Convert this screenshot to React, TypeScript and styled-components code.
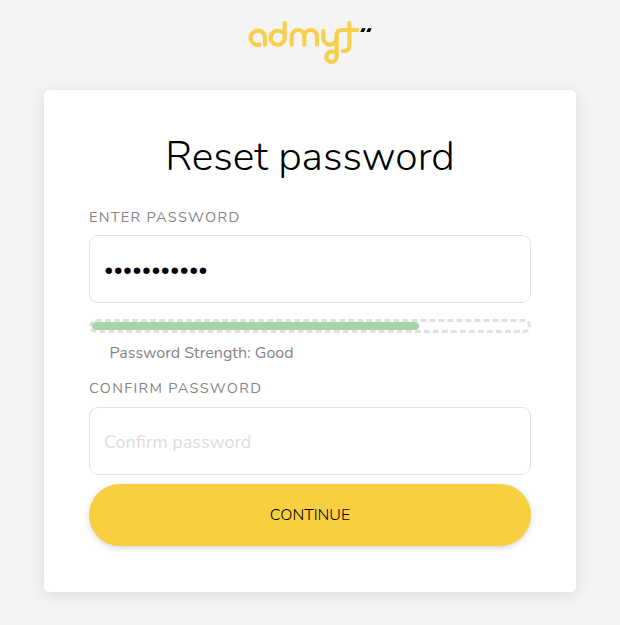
import React, { useState } from "react";
import styled, { createGlobalStyle } from "styled-components";

const GlobalStyle = createGlobalStyle`
  *, *::before, *::after { box-sizing: border-box; }
  body {
    margin: 0;
    background: #f4f4f4;
    font-family: Nunito, Lato, sans-serif;
    color: #000;
  }
`;

const Page = styled.main`
  display: flex;
  flex-direction: column;
  align-items: center;
  min-height: 625px;
  padding-top: 20px;
`;

const Logo = styled.svg`
  display: block;
  width: 124px;
  height: 46px;
  margin-bottom: 24px;
`;

const Card = styled.form`
  display: flex;
  flex-direction: column;
  width: 532px;
  height: 502px;
  padding: 39px 45px 0;
  background: #fff;
  border-radius: 5px;
  box-shadow: 0 3px 15px rgba(0, 0, 0, 0.1);
`;

const Title = styled.h1`
  margin: 0 0 19px;
  font-size: 40.8px;
  line-height: 56px;
  font-weight: 300;
  text-align: center;
  white-space: nowrap;
`;

const Label = styled.label<{ $gap: number }>`
  height: 20px;
  margin-bottom: ${({ $gap }) => $gap}px;
  font-size: 14.5px;
  font-weight: 370;
  line-height: 26px;
  letter-spacing: 1.3px;
  text-transform: uppercase;
  color: #858585;
`;

const Field = styled.input`
  width: 100%;
  height: 68px;
  padding: 2px 14px 0;
  border: 1px solid #e3e3e3;
  border-radius: 9px;
  outline: none;
  background: #fff;
  font: 400 18px Nunito, Lato, sans-serif;
  color: #000;
  &::placeholder { color: #dcdcdc; opacity: 1; }
`;

const Meter = styled.div`
  height: 14px;
  margin-top: 16px;
  border: 3px dashed #e0e0e0;
  border-radius: 7px;
`;

const MeterFill = styled.div`
  height: 8px;
  border-radius: 4px;
  background: #a5d6a7;
`;

const Strength = styled.p`
  height: 25px;
  margin: 10px 0 7px 20.5px;
  font-size: 16px;
  line-height: 20px;
  color: #858585;
`;

const Submit = styled.button`
  height: 62px;
  margin-top: 9px;
  border: 0;
  border-radius: 31px;
  background: #f7cf41;
  box-shadow: 0 2px 6px rgba(0, 0, 0, 0.16);
  font: 350 16px Nunito, Lato, sans-serif;
  text-transform: uppercase;
  color: #000;
`;

function AdmytLogo() {
  return (
    <Logo viewBox="24 24 372 138" role="img" aria-label="admyt">
      <g fill="none" stroke="#f7cf4c" strokeWidth="12.500" strokeLinecap="round" strokeLinejoin="round">
        <path d="M59 98a21.500 21.500 0 1 1 16-21v21" />
        <path d="M134 33v44a21 21 0 1 1-9-17" />
        <path d="M155 98V73a19 19 0 0 1 38 0v25M193 73a19 19 0 0 1 38 0v25" />
        <path d="M250 57v21a20 20 0 0 0 40 0M290 74v60a15.500 15.500 0 1 1-15-15h6" />
        <path d="M290 78V70q0-16 16-16H352M328 33v68q0 16-19 16" />
      </g>
      <path d="M366 49h11l-5 11h-11zM384 49h11l-5 11h-11z" fill="#000" />
    </Logo>
  );
}

export default function App() {
  const [password, setPassword] = useState("password123");
  const [confirm, setConfirm] = useState("");
  const strength = 75;
  return (
    <>
      <GlobalStyle />
      <Page>
        <AdmytLogo />
        <Card onSubmit={(e) => e.preventDefault()}>
          <Title>Reset password</Title>
          <Label $gap={11} htmlFor="password">Enter password</Label>
          <Field id="password" type="password" value={password} onChange={(e) => setPassword(e.target.value)} />
          <Meter>
            <MeterFill style={{ width: `${strength}%` }} />
          </Meter>
          <Strength>Password Strength: Good</Strength>
          <Label $gap={12} htmlFor="confirm">Confirm password</Label>
          <Field id="confirm" type="password" placeholder="Confirm password" value={confirm} onChange={(e) => setConfirm(e.target.value)} />
          <Submit type="submit">Continue</Submit>
        </Card>
      </Page>
    </>
  );
}
